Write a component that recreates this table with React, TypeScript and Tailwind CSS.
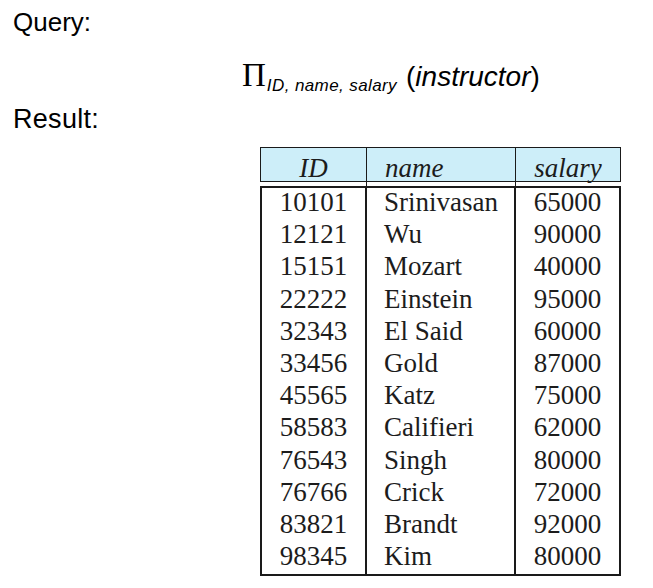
const rows: [string, string, string][] = [
  ["10101", "Srinivasan", "65000"],
  ["12121", "Wu", "90000"],
  ["15151", "Mozart", "40000"],
  ["22222", "Einstein", "95000"],
  ["32343", "El Said", "60000"],
  ["33456", "Gold", "87000"],
  ["45565", "Katz", "75000"],
  ["58583", "Califieri", "62000"],
  ["76543", "Singh", "80000"],
  ["76766", "Crick", "72000"],
  ["83821", "Brandt", "92000"],
  ["98345", "Kim", "80000"],
];

const sans = "font-['Liberation_Sans',Arial,sans-serif]";
const serif = "font-['Liberation_Serif','Times_New_Roman',serif]";

export default function App() {
  return (
    <div className="w-[653px] h-[588px] bg-white text-black overflow-hidden">
      {/* Query label */}
      <div className={`${sans} text-[26px] leading-[30px] pl-[13px] pt-[7px]`}>Query:</div>

      {/* Projection expression */}
      <div className="pl-[242px] mt-[19px] flex items-baseline h-[34px]">
        <span className={`${serif} text-[33px] leading-none`}>Π</span>
        <span className={`${sans} italic text-[17px] tracking-[0.4px] relative top-[5px] ml-[1px]`}>ID, name, salary</span>
        <span className={`${sans} text-[28px] ml-[9px]`}>
          (<span className="italic">instructor</span>)
        </span>
      </div>

      {/* Result label */}
      <div className={`${sans} text-[27px] tracking-[0.3px] leading-[30px] pl-[13px] mt-[14px]`}>Result:</div>

      {/* Result table */}
      <div className={`${serif} ml-[260px] mt-[13px] w-[361px] text-[27px] text-[#1c1c1c]`}>
        <div className="grid grid-cols-[106px_149px_1fr] h-[35px] bg-[#cdeef9] border border-[#1a1a1a] italic">
          <div className="flex items-center justify-center border-r border-[#1a1a1a]">ID</div>
          <div className="flex items-center pl-[18px] border-r border-[#1a1a1a]">name</div>
          <div className="flex items-center justify-center">salary</div>
        </div>

        <div className="mt-[4px] border-2 border-[#1a1a1a] grid grid-cols-[105px_149px_1fr]">
          <div className="border-r-2 border-[#1a1a1a] flex flex-col">
            {rows.map((r) => (
              <div key={r[0] + r[1]} className="h-[32.2px] leading-[28px] text-center">{r[0]}</div>
            ))}
          </div>
          <div className="border-r-2 border-[#1a1a1a] flex flex-col">
            {rows.map((r) => (
              <div key={r[0] + r[1]} className="h-[32.2px] leading-[28px] pl-[17px]">{r[1]}</div>
            ))}
          </div>
          <div className="flex flex-col">
            {rows.map((r) => (
              <div key={r[0] + r[1]} className="h-[32.2px] leading-[28px] text-center">{r[2]}</div>
            ))}
          </div>
        </div>
      </div>
    </div>
  );
}
